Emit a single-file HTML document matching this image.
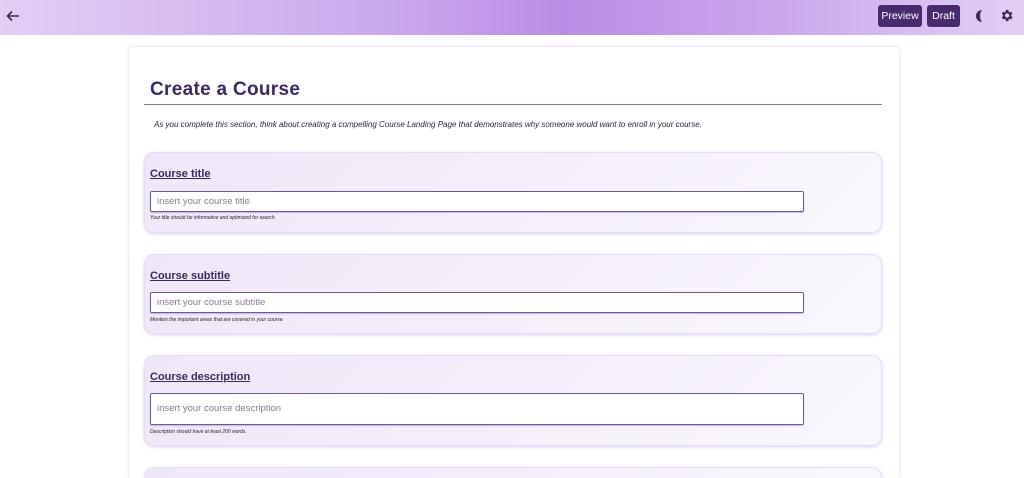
<!DOCTYPE html><html><head><style>
html,body{margin:0;width:1024px;height:478px;overflow:hidden}
body{background:#fff;font-family:"Liberation Sans",sans-serif;position:relative}
.top{position:absolute;left:0;top:0;width:1024px;height:35px;background:linear-gradient(90deg,#e2cff4 0%,#c9a6ec 40%,#b98de6 55%,#caa6ec 75%,#e2cff4 100%)}
.btn{position:absolute;top:5px;height:22px;background:#472b6e;color:#fff;font-size:10.5px;line-height:22px;text-align:center;border-radius:3px}
.card{position:absolute;left:128px;top:46px;width:770px;height:431px;background:#fff;border:1px solid #f1ecf7;border-bottom:none;border-radius:4px 4px 0 0;box-shadow:0 0 4px rgba(180,150,220,.2)}
h1{position:absolute;left:150px;top:79px;margin:0;font-size:19px;color:#3e2a63;font-weight:bold;letter-spacing:.3px}
.hr{position:absolute;left:144px;top:104px;width:738px;height:1px;background:#8a78a8}
.intro{position:absolute;left:154px;top:120px;font-size:8px;font-style:italic;color:#2c2440}
.sec{position:absolute;left:144px;width:736px;border-radius:10px;background:linear-gradient(135deg,#efe6f8,#faf7fd);border:1px solid #e8dbf8;box-shadow:0 1px 3px rgba(190,160,230,.5)}
.sec b{position:absolute;left:5px;top:15px;font-size:11px;color:#3a2a58;text-decoration:underline}
.in{position:absolute;left:5px;width:654px;background:#fff;border:1px solid #6d5a8a;border-radius:2px;box-shadow:0 1px 1px #c9b2ee;font-size:9.5px;color:#8a7a96;padding-left:6px;box-sizing:border-box}
.hint{position:absolute;left:5px;font-size:5px;font-style:italic;color:#222}
</style></head><body>
<div class="top">
<svg style="position:absolute;left:6px;top:10px" width="14" height="12" viewBox="0 0 14 12"><path d="M13 6H2M6 1.5L1.5 6 6 10.5" stroke="#3a2a58" stroke-width="1.6" fill="none"/></svg>
<div class="btn" style="left:878px;width:44px">Preview</div>
<div class="btn" style="left:927px;width:33px">Draft</div>
<svg style="position:absolute;left:974px;top:9px" width="12" height="14" viewBox="0 0 12 14"><path d="M8 1A6 6 0 1 0 8 13A10 10 0 0 1 8 1Z" fill="#3a2a58"/></svg>
<svg style="position:absolute;left:999px;top:8px" width="15" height="15" viewBox="0 0 24 24"><path fill="#3a2a58" d="M19.4 13a7.5 7.5 0 0 0 0-2l2.1-1.6-2-3.5-2.5 1a7 7 0 0 0-1.7-1L15 3h-4l-.4 2.9a7 7 0 0 0-1.7 1l-2.5-1-2 3.5L6.6 11a7.5 7.5 0 0 0 0 2l-2.1 1.6 2 3.5 2.5-1a7 7 0 0 0 1.7 1L11 21h4l.4-2.9a7 7 0 0 0 1.7-1l2.5 1 2-3.5zM13 15.5a3.5 3.5 0 1 1 0-7 3.5 3.5 0 0 1 0 7z"/></svg>
</div>
<div class="card"></div>
<h1>Create a Course</h1><div class="hr"></div>
<div class="intro">As you complete this section, think about creating a compelling Course Landing Page that demonstrates why someone would want to enroll in your course.</div>
<div class="sec" style="top:152px;height:79px"><b>Course title</b><div class="in" style="top:38px;height:21px;line-height:19px">insert your course title</div><div class="hint" style="top:62px">Your title should be informative and optimized for search.</div></div>
<div class="sec" style="top:254px;height:78px"><b>Course subtitle</b><div class="in" style="top:37px;height:21px;line-height:19px">insert your course subtitle</div><div class="hint" style="top:62px">Mention the important areas that are covered in your course.</div></div>
<div class="sec" style="top:355px;height:89px"><b>Course description</b><div class="in" style="top:37px;height:32px;line-height:30px">insert your course description</div><div class="hint" style="top:73px">Description should have at least 200 words.</div></div>
<div class="sec" style="top:467px;height:10px;border-bottom:none;border-radius:10px 10px 0 0"></div>
</body></html>
